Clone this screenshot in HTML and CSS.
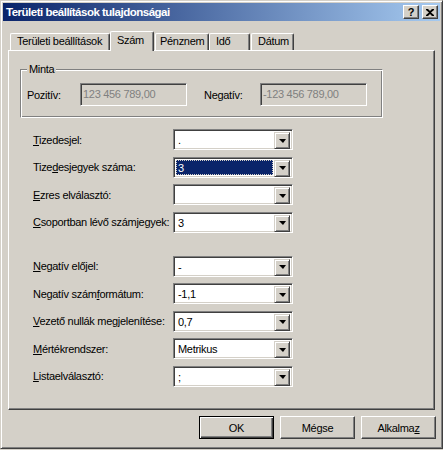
FILE: index.html
```html
<!DOCTYPE html>
<html lang="hu">
<head>
<meta charset="utf-8">
<title>Területi beállítások tulajdonságai</title>
<link rel="stylesheet" href="styles.css">
</head>
<body>
<div class="window">
  <div class="titlebar">
    <span class="title">Területi beállítások tulajdonságai</span>
    <div class="caption-buttons">
      <span class="cap-btn">?</span>
      <span class="cap-btn close">
        <svg width="8" height="7" viewBox="0 0 8 7"><path d="M0 0h2l2 2 2-2h2v1L5 3.5 8 6v1H6L4 5 2 7H0V6l3-2.5L0 1z" fill="#000"/></svg>
      </span>
    </div>
  </div>
  <div class="client">
    <div class="tabs">
      <div class="tab t1">Területi beállítások</div>
      <div class="tab active t2">Szám</div>
      <div class="tab t3">Pénznem</div>
      <div class="tab t4">Idő</div>
      <div class="tab t5">Dátum</div>
    </div>
    <div class="panel">
      <div class="group">
        <span class="legend">Minta</span>
        <div class="sample-row">
          <span class="s-label">Pozitív:</span>
          <div class="textbox">123 456 789,00</div>
          <span class="s-label s-neg">Negatív:</span>
          <div class="textbox">-123 456 789,00</div>
        </div>
      </div>
      <div class="rows">
        <div class="row"><span class="label"><u>T</u>izedesjel:</span><div class="combo"><span class="val">.</span><span class="drop"><i></i></span></div></div>
        <div class="row"><span class="label">Tize<u>d</u>esjegyek száma:</span><div class="combo"><span class="val selected">3</span><span class="drop"><i></i></span></div></div>
        <div class="row"><span class="label"><u>E</u>zres elválasztó:</span><div class="combo"><span class="val"></span><span class="drop"><i></i></span></div></div>
        <div class="row"><span class="label"><u>C</u>soportban lévő számjegyek:</span><div class="combo"><span class="val">3</span><span class="drop"><i></i></span></div></div>
      </div>
      <div class="rows second">
        <div class="row"><span class="label"><u>N</u>egatív előjel:</span><div class="combo"><span class="val">-</span><span class="drop"><i></i></span></div></div>
        <div class="row"><span class="label">Negatív szám<u>f</u>ormátum:</span><div class="combo"><span class="val">-1,1</span><span class="drop"><i></i></span></div></div>
        <div class="row"><span class="label"><u>V</u>ezető nullák megjelenítése:</span><div class="combo"><span class="val">0,7</span><span class="drop"><i></i></span></div></div>
        <div class="row"><span class="label"><u>M</u>értékrendszer:</span><div class="combo"><span class="val">Metrikus</span><span class="drop"><i></i></span></div></div>
        <div class="row"><span class="label"><u>L</u>istaelválasztó:</span><div class="combo"><span class="val">;</span><span class="drop"><i></i></span></div></div>
      </div>
    </div>
    <div class="buttons">
      <div class="btn default"><span>OK</span></div>
      <div class="btn"><span>Mégse</span></div>
      <div class="btn"><span>Alkalma<u>z</u></span></div>
    </div>
  </div>
</div>
</body>
</html>
```
FILE: styles.css
```css
* { box-sizing: border-box; }
html, body { margin: 0; padding: 0; background: #D4D0C8; }
body {
  font-family: "Liberation Sans", Arial, sans-serif;
  font-size: 11px;
  letter-spacing: -0.3px;
  color: #000;
  width: 443px;
  height: 450px;
  overflow: hidden;
}
u { text-decoration: underline; text-underline-offset: 1px; }

.window {
  width: 443px;
  height: 449px;
  background: #D4D0C8;
  border: 1px solid;
  border-color: #D4D0C8 #404040 #404040 #D4D0C8;
  box-shadow: inset 1px 1px 0 #fff, inset -1px -1px 0 #808080;
  padding: 2px;
  display: flex;
  flex-direction: column;
}

.titlebar {
  height: 18px;
  background: linear-gradient(to right, #0A246A, #A6CAF0);
  display: flex;
  align-items: center;
  justify-content: space-between;
  padding: 0 2px 0 3px;
}
.title {
  color: #fff;
  font-family: "Liberation Sans", Arial, sans-serif;
  font-weight: bold;
  font-size: 11.5px;
  letter-spacing: -0.5px;
}
.caption-buttons { display: flex; gap: 2px; }
.cap-btn {
  width: 16px;
  height: 14px;
  background: #D4D0C8;
  border: 1px solid;
  border-color: #fff #404040 #404040 #fff;
  box-shadow: inset -1px -1px 0 #808080;
  display: flex;
  align-items: center;
  justify-content: center;
  font-weight: bold;
  font-size: 11px;
  line-height: 1;
  letter-spacing: 0;
  font-family: "Liberation Sans", Arial, sans-serif;
}
.cap-btn.close { margin-left: 1px; }

.client {
  flex: 1;
  display: flex;
  flex-direction: column;
  padding: 10px 5px 0 5px;
}

.tabs {
  display: flex;
  align-items: flex-end;
  height: 19px;
  padding-left: 2px;
}
.tab {
  height: 17px;
  border-top: 1px solid #fff;
  border-left: 1px solid #fff;
  border-right: 1px solid #404040;
  box-shadow: inset -1px 0 0 #808080;
  border-radius: 2px 2px 0 0;
  padding: 1px 0 0 6px;
  white-space: nowrap;
}
.t1 { width: 100px; }
.t2 { width: 44px; }
.t3 { width: 54px; margin-left: 1px; padding-left: 4px; }
.t4 { width: 41px; }
.t5 { width: 43px; margin-left: 1px; }
.tab.active {
  height: 20px;
  margin-bottom: -1px;
  position: relative;
  z-index: 1;
  background: #D4D0C8;
  padding-top: 2px;
}

.panel {
  height: 360px;
  border: 1px solid;
  border-color: #fff #404040 #404040 #fff;
  box-shadow: inset -1px -1px 0 #808080;
  padding: 18px 0 0 11px;
}

.group {
  width: 363px;
  height: 49px;
  border: 1px solid;
  border-color: #808080 #fff #fff #808080;
  box-shadow: inset 1px 1px 0 #fff, inset -1px -1px 0 #808080;
  padding: 0 0 0 5px;
}
.legend {
  display: inline-block;
  background: #D4D0C8;
  padding: 0 2px;
  margin: -7px 0 0 1px;
  line-height: 12px;
  vertical-align: top;
}
.sample-row {
  display: flex;
  align-items: center;
  margin-top: 1px;
}
.s-label { width: 54px; padding-left: 1px; }
.s-neg { width: 57px; margin-left: 16px; }
.textbox {
  width: 107px;
  height: 23px;
  background: #D4D0C8;
  color: #808080;
  border: 1px solid;
  border-color: #808080 #fff #fff #808080;
  box-shadow: inset 1px 1px 0 #404040, inset -1px -1px 0 #D4D0C8;
  padding: 4px 0 0 2px;
  white-space: nowrap;
  overflow: hidden;
}

.rows {
  display: flex;
  flex-direction: column;
  gap: 6.5px;
  padding-left: 13px;
  margin-top: 11px;
}
.rows.second { margin-top: 23px; }
.row { display: flex; align-items: center; height: 21px; }
.label { width: 140px; white-space: nowrap; }
.combo {
  width: 120px;
  height: 21px;
  background: #fff;
  border: 1px solid;
  border-color: #808080 #fff #fff #808080;
  box-shadow: inset 1px 1px 0 #404040, inset -1px -1px 0 #D4D0C8;
  padding: 2px;
  display: flex;
}
.val {
  flex: 1;
  padding: 2px 0 0 2px;
  line-height: 13px;
  margin-right: 1px;
}
.val.selected {
  background: #0A246A;
  color: #fff;
  outline: 1px dotted #D4D0C8;
  outline-offset: -1px;
  margin: 0 1px 0 0;
}
.drop {
  width: 16px;
  height: 17px;
  background: #D4D0C8;
  border: 1px solid;
  border-color: #D4D0C8 #404040 #404040 #D4D0C8;
  box-shadow: inset 1px 1px 0 #fff, inset -1px -1px 0 #808080;
  display: flex;
  align-items: center;
  justify-content: center;
}
.drop i {
  display: block;
  width: 0;
  height: 0;
  border-left: 4px solid transparent;
  border-right: 3px solid transparent;
  border-top: 4px solid #000;
  margin-left: 1px;
}

.buttons {
  display: flex;
  justify-content: flex-end;
  gap: 6px;
  margin-top: 6px;
  margin-right: -1px;
}
.btn {
  width: 75px;
  height: 23px;
  background: #D4D0C8;
  border: 1px solid;
  border-color: #fff #404040 #404040 #fff;
  box-shadow: inset -1px -1px 0 #808080;
  display: flex;
  align-items: center;
  justify-content: center;
}
.btn.default {
  border: 1px solid #000;
  box-shadow: inset 1px 1px 0 #fff, inset -1px -1px 0 #404040, inset -2px -2px 0 #808080;
}
```
